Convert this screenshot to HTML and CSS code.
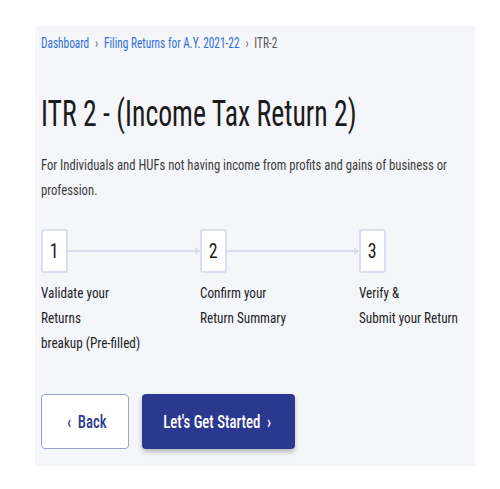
FILE: index.html
```html
<!DOCTYPE html>
<html lang="en">
<head>
  <meta charset="UTF-8">
  <meta name="viewport" content="width=device-width, initial-scale=1.0">
  <title>ITR 2</title>
  <link rel="stylesheet" href="styles.css">
</head>
<body>
<div class="page">
  <div class="crumbs">
    <a href="#">Dashboard</a>
    <span class="sep">&rsaquo;</span>
    <a href="#">Filing Returns for A.Y. 2021-22</a>
    <span class="sep">&rsaquo;</span>
    <span class="here">ITR-2</span>
  </div>

  <h1 class="title">ITR 2 - (Income Tax Return 2)</h1>
  <p class="desc">For Individuals and HUFs not having income from profits and gains of business or profession.</p>

  <div class="steps">
    <div class="step">
      <div class="step-top">
        <div class="num"><span>1</span></div>
        <div class="line"></div>
      </div>
      <div class="label">Validate your<br>Returns<br>breakup (Pre-filled)</div>
    </div>
    <div class="step">
      <div class="step-top">
        <div class="num"><span>2</span></div>
        <div class="line"></div>
      </div>
      <div class="label">Confirm your<br>Return Summary</div>
    </div>
    <div class="step">
      <div class="step-top">
        <div class="num"><span>3</span></div>
      </div>
      <div class="label">Verify &amp;<br>Submit your Return</div>
    </div>
  </div>

  <div class="actions">
    <button class="btn btn-back"><span class="txt"><span class="chev">&lsaquo;</span> Back</span></button>
    <button class="btn btn-start"><span class="txt">Let's Get Started <span class="chev">&rsaquo;</span></span></button>
  </div>
</div>
</body>
</html>
```

FILE: styles.css
```css
body {
  margin: 0;
  background: #fff;
  font-family: Roboto, "Liberation Sans", sans-serif;
  font-stretch: 75%;
}

.page {
  margin: 26px 0 0 35px;
  width: 440px;
  height: 440px;
  box-sizing: border-box;
  padding: 8px 6px 0 6px;
  background: #f5f6fa;
}

/* the source UI uses a narrow face, so text is squeezed to match */
.crumbs {
  font-size: 14px;
  height: 18px;
  line-height: 18px;
  color: #555;
  white-space: nowrap;
  transform: scaleX(0.81);
  transform-origin: left center;
}

.crumbs a {
  color: #2f6fd8;
  text-decoration: none;
}

.crumbs .sep {
  margin: 0 4px;
  color: #666;
}

.title {
  margin: 41px 0 0 0;
  font-size: 36px;
  font-weight: 400;
  line-height: 42px;
  color: #1b1b1b;
  white-space: nowrap;
  transform: scaleX(0.77);
  transform-origin: left center;
}

.desc {
  width: 506px;
  margin: 18px 0 0 0;
  font-size: 15px;
  line-height: 25px;
  color: #3c3c3c;
  transform: scaleX(0.845);
  transform-origin: left top;
}

.steps {
  display: grid;
  grid-template-columns: 159px 159px 1fr;
  margin-top: 26px;
}

.step-top {
  display: flex;
  align-items: center;
}

.num {
  width: 27px;
  height: 44px;
  box-sizing: border-box;
  border: 2px solid #dcddee;
  border-radius: 3px;
  background: #fff;
  font-size: 21px;
  line-height: 40px;
  text-align: center;
  color: #1b1b1b;
}

.num span {
  display: inline-block;
  transform: scaleX(0.85);
}

.line {
  flex: 1;
  height: 2px;
  background: #dcddee;
  position: relative;
}

.line::after {
  content: "";
  position: absolute;
  right: 0;
  top: -3px;
  border-left: 5px solid #dcddee;
  border-top: 4px solid transparent;
  border-bottom: 4px solid transparent;
}

.label {
  margin-top: 8px;
  font-size: 15px;
  line-height: 25px;
  color: #222;
  white-space: nowrap;
  transform: scaleX(0.88);
  transform-origin: left top;
}

.actions {
  display: flex;
  gap: 13px;
  margin-top: 38px;
}

.btn {
  height: 55px;
  box-sizing: border-box;
  border-radius: 4px;
  font-family: inherit;
  font-stretch: 75%;
  font-size: 18px;
  font-weight: 500;
  cursor: pointer;
  white-space: nowrap;
}

.btn .txt {
  display: inline-block;
  transform: scaleX(0.82);
}

.btn-back {
  width: 88px;
  background: #fff;
  border: 1px solid #9aa0cf;
  color: #2e3b8e;
}

.btn-start {
  width: 153px;
  background: #2b388f;
  border: none;
  color: #fff;
  box-shadow: 0 3px 5px rgba(0, 0, 0, 0.25);
}

.chev {
  margin: 0 4px;
}
```
